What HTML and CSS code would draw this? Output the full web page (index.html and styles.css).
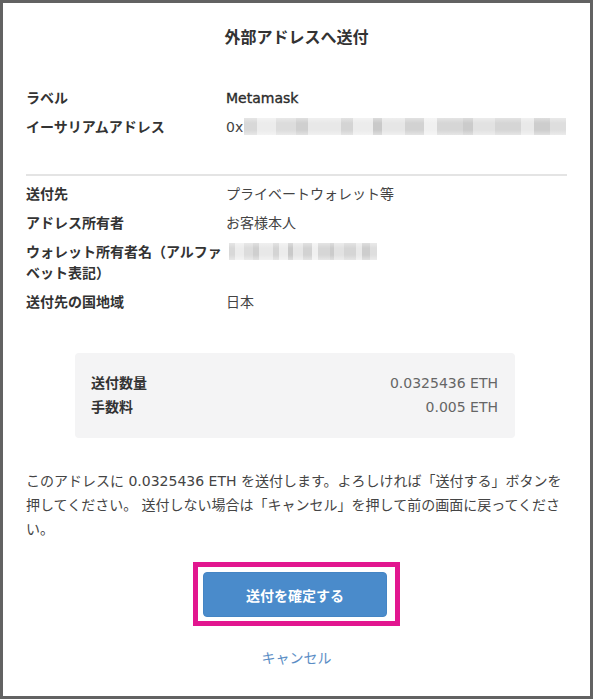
FILE: index.html
```html
<!DOCTYPE html>
<html lang="ja">
    <head>
        <meta charset="utf-8">
        <title>外部アドレスへ送付</title>
        <link rel="stylesheet" href="styles.css">
    </head>
    <body>
        <div class="frame">
          <h2 class="title">外部アドレスへ送付</h2>

          <!-- 送付先アドレス -->
          <dl class="info first">
            <dt>ラベル</dt>
            <dd class="strong">Metamask</dd>
            <dt>イーサリアムアドレス</dt>
            <dd>0x<span class="masked addr"></span></dd>
          </dl>

          <hr class="divider">

          <dl class="info">
            <dt>送付先</dt>
            <dd>プライベートウォレット等</dd>
            <dt>アドレス所有者</dt>
            <dd>お客様本人</dd>
            <dt>ウォレット所有者名（アルファベット表記）</dt>
            <dd><span class="masked name"></span></dd>
            <dt>送付先の国地域</dt>
            <dd>日本</dd>
          </dl>

          <!-- 数量 -->
          <div class="summary">
            <div class="sum-row">
              <span class="sum-label">送付数量</span>
              <span class="sum-value">0.0325436 ETH</span>
            </div>
            <div class="sum-row">
              <span class="sum-label">手数料</span>
              <span class="sum-value">0.005 ETH</span>
            </div>
          </div>

          <p class="notice">このアドレスに 0.0325436 ETH を送付します。よろしければ「送付する」ボタンを押してください。 送付しない場合は「キャンセル」を押して前の画面に戻ってください。</p>

          <div class="highlight">
            <button type="button" class="confirm">送付を確定する</button>
          </div>

          <a class="cancel" href="#">キャンセル</a>
        </div>
    </body>
</html>
```

FILE: styles.css
```css
/*送付確認*/
html, body {
  margin: 0;
  padding: 0;
  background-color: #fff;
}
body {
  font-family: "DejaVu Sans", "Noto Sans CJK JP", sans-serif;
  font-size: 14px;
  color: #333;
}
.frame {
  box-sizing: border-box;
  width: 593px;
  height: 699px;
  border: 3px solid #626262;
  padding: 24px 23px 0 23px;
  background-color: #fff;
}
.title {
  margin: 0;
  font-size: 16px;
  line-height: 22px;
  font-weight: bold;
  text-align: center;
  color: #333;
}
.info {
  display: grid;
  grid-template-columns: 200px 1fr;
  row-gap: 8px;
  margin: 0;
  line-height: 21px;
}
.info.first {
  margin-top: 39px;
}
.info dt {
  font-weight: bold;
  color: #333;
}
.info dd {
  margin: 0;
  color: #444;
}
.info dd.strong {
  color: #2b2b2b;
  -webkit-text-stroke: 0.35px #2b2b2b;
}
.divider {
  border: none;
  border-top: 2px solid #e4e4e4;
  margin: 36px 0 8px 0;
}
.masked {
  display: inline-block;
  vertical-align: -3px;
  height: 17px;
  background-image:
    linear-gradient(to bottom, rgba(255,255,255,0.35) 0, rgba(255,255,255,0) 30%, rgba(255,255,255,0) 70%, rgba(255,255,255,0.4) 100%),
    linear-gradient(to right,
      #d8d8d8 0, #d8d8d8 4%, #ececec 4%, #ececec 10%, #dcdcdc 10%, #dcdcdc 16%,
      #cfcfcf 16%, #cfcfcf 20%, #e8e8e8 20%, #e8e8e8 30%, #d4d4d4 30%, #d4d4d4 34%,
      #ececec 34%, #ececec 40%, #c9c9c9 40%, #c9c9c9 43%, #e6e6e6 43%, #e6e6e6 50%,
      #d2d2d2 50%, #d2d2d2 56%, #f0f0f0 56%, #f0f0f0 60%, #d6d6d6 60%, #d6d6d6 68%,
      #cbcbcb 68%, #cbcbcb 71%, #e2e2e2 71%, #e2e2e2 78%, #d5d5d5 78%, #d5d5d5 86%,
      #e9e9e9 86%, #e9e9e9 90%, #cdcdcd 90%, #cdcdcd 95%, #dedede 95%);
}
.masked.addr {
  width: 322px;
  margin-left: 1px;
}
.masked.name {
  width: 148px;
  margin-left: 3px;
}
.summary {
  width: 440px;
  box-sizing: border-box;
  margin: 40px 0 0 49px;
  padding: 18px 17px 19px 16px;
  background-color: #f4f4f5;
  border-radius: 4px;
}
.sum-row {
  display: flex;
  justify-content: space-between;
  line-height: 24px;
}
.sum-label {
  font-weight: bold;
  color: #333;
}
.sum-value {
  color: #666;
}
.notice {
  margin: 31px 0 0 0;
  line-height: 24px;
  color: #444;
}
.highlight {
  width: max-content;
  margin: 21px auto 0 auto;
  border: 5px solid #e2168f;
  padding: 5px 8px 4px 5px;
}
.confirm {
  display: block;
  width: 184px;
  height: 45px;
  border: 1px solid #4585c4;
  border-radius: 4px;
  background-color: #4a8bcb;
  color: #fff;
  font-family: inherit;
  font-size: 14px;
  font-weight: bold;
  cursor: pointer;
}
.cancel {
  display: block;
  width: max-content;
  margin: 21px auto 0 auto;
  line-height: 22px;
  color: #5a8dc5;
  text-decoration: none;
}
```
